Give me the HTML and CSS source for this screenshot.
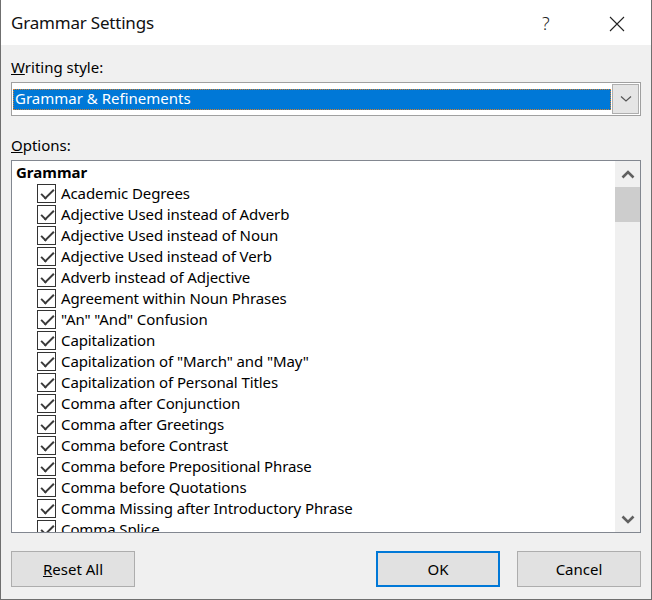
FILE: index.html
```html
<!DOCTYPE html>
<html>
<head>
<meta charset="utf-8">
<link rel="stylesheet" href="styles.css">
</head>
<body>
<div class="window">
  <div class="titlebar">
    <span class="title">Grammar Settings</span>
    <span class="help">?</span>
    <span class="close">
      <svg width="16" height="16" viewBox="0 0 16 16"><path d="M1 1 L15 15 M15 1 L1 15" stroke="#222" stroke-width="1.1" fill="none"/></svg>
    </span>
  </div>
  <div class="content">
    <div class="label label-ws"><u>W</u>riting style:</div>
    <div class="combo">
      <div class="combo-sel">Grammar &amp; Refinements</div>
      <div class="combo-btn">
        <svg width="12" height="8" viewBox="0 0 12 8"><path d="M1 1.5 L6 6 L11 1.5" stroke="#555" stroke-width="1.2" fill="none"/></svg>
      </div>
    </div>
    <div class="label label-opt"><u>O</u>ptions:</div>
    <div class="listbox">
      <div class="list">
        <div class="group">Grammar</div>
        <div class="item"><span class="cb"></span>Academic Degrees</div>
        <div class="item"><span class="cb"></span>Adjective Used instead of Adverb</div>
        <div class="item"><span class="cb"></span>Adjective Used instead of Noun</div>
        <div class="item"><span class="cb"></span>Adjective Used instead of Verb</div>
        <div class="item"><span class="cb"></span>Adverb instead of Adjective</div>
        <div class="item"><span class="cb"></span>Agreement within Noun Phrases</div>
        <div class="item"><span class="cb"></span>"An" "And" Confusion</div>
        <div class="item"><span class="cb"></span>Capitalization</div>
        <div class="item"><span class="cb"></span>Capitalization of "March" and "May"</div>
        <div class="item"><span class="cb"></span>Capitalization of Personal Titles</div>
        <div class="item"><span class="cb"></span>Comma after Conjunction</div>
        <div class="item"><span class="cb"></span>Comma after Greetings</div>
        <div class="item"><span class="cb"></span>Comma before Contrast</div>
        <div class="item"><span class="cb"></span>Comma before Prepositional Phrase</div>
        <div class="item"><span class="cb"></span>Comma before Quotations</div>
        <div class="item"><span class="cb"></span>Comma Missing after Introductory Phrase</div>
        <div class="item"><span class="cb"></span>Comma Splice</div>
      </div>
      <div class="scrollbar">
        <div class="arrow">
          <svg width="14" height="9" viewBox="0 0 14 9"><path d="M1.5 7.5 L7 2 L12.5 7.5" stroke="#606060" stroke-width="2.6" fill="none"/></svg>
        </div>
        <div class="thumb"></div>
        <div class="track"></div>
        <div class="arrow">
          <svg width="14" height="9" viewBox="0 0 14 9"><path d="M1.5 1.5 L7 7 L12.5 1.5" stroke="#606060" stroke-width="2.6" fill="none"/></svg>
        </div>
      </div>
    </div>
    <div class="buttons">
      <div class="btn"><u>R</u>eset All</div>
      <div class="spacer"></div>
      <div class="btn btn-default">OK</div>
      <div class="btn">Cancel</div>
    </div>
  </div>
</div>
</body>
</html>
```

FILE: styles.css
```css
* { box-sizing: border-box; }
html, body { margin: 0; padding: 0; }
body {
  font-family: "Noto Sans", "Open Sans", sans-serif;
  color: #000;
  background: #f0f0f0;
}
.window {
  width: 652px;
  height: 600px;
  border: 1px solid #6f6f6f;
  border-top: none;
  background: #f0f0f0;
  display: flex;
  flex-direction: column;
}
.titlebar {
  height: 45px;
  flex: none;
  background: #fff;
  display: flex;
  align-items: center;
  padding-left: 10px;
}
.title {
  font-size: 17px;
  flex: 1;
  color: #111;
  letter-spacing: -0.2px;
}
.help {
  font-size: 18px;
  color: #222;
  width: 67px;
  font-weight: 300;
}
.close {
  width: 42px;
  display: flex;
  align-items: center;
  padding-top: 2px;
}
.content {
  flex: 1;
  padding: 0 10px;
  display: flex;
  flex-direction: column;
}
.label {
  font-size: 15px;
  line-height: 20px;
}
.label-ws { margin-top: 12px; margin-bottom: 5px; }
.label-opt { margin-top: 19px; margin-bottom: 5px; }
.combo {
  height: 34px;
  flex: none;
  border: 1px solid #a0a0a0;
  background: #fff;
  display: flex;
  align-items: center;
  padding: 0 1px;
}
.combo-sel {
  flex: 1;
  height: 21px;
  background: #0078d7;
  color: #fff;
  font-size: 15px;
  line-height: 19px;
  padding-left: 2px;
  outline: 1px dotted #d08030;
  outline-offset: -1px;
}
.combo-btn {
  width: 27px;
  height: 30px;
  background: #e5e5e5;
  border: 1px solid #aeaeae;
  display: flex;
  align-items: center;
  justify-content: center;
  margin-left: 1px;
}
.listbox {
  height: 373px;
  flex: none;
  border: 1px solid #828790;
  background: #fff;
  display: flex;
  overflow: hidden;
}
.list {
  flex: 1;
  padding-top: 1px;
  overflow: hidden;
}
.group {
  font-weight: bold;
  font-size: 15px;
  height: 21px;
  line-height: 21px;
  padding-left: 4px;
}
.item {
  font-size: 15px;
  letter-spacing: -0.1px;
  height: 21px;
  line-height: 21px;
  display: flex;
  align-items: center;
  padding-left: 25px;
  white-space: nowrap;
}
.cb {
  width: 19px;
  height: 19px;
  border: 1px solid #333;
  background: #fff;
  margin-right: 5px;
  position: relative;
  flex: none;
}
.cb::after {
  content: "";
  position: absolute;
  left: 6px;
  top: 1px;
  width: 5px;
  height: 11px;
  border-right: 2px solid #3a3a3a;
  border-bottom: 2px solid #3a3a3a;
  transform: rotate(45deg);
}
.scrollbar {
  width: 25px;
  background: #f0f0f0;
  display: flex;
  flex-direction: column;
}
.arrow {
  height: 26px;
  display: flex;
  align-items: center;
  justify-content: center;
}
.thumb {
  height: 35px;
  background: #cdcdcd;
}
.track { flex: 1; }
.buttons {
  display: flex;
  margin-top: 18px;
  gap: 17px;
}
.spacer { flex: 1; }
.btn {
  width: 124px;
  height: 36px;
  border: 1px solid #adadad;
  background: #e1e1e1;
  font-size: 15px;
  display: flex;
  align-items: center;
  justify-content: center;
}
.btn-default {
  border: 2px solid #0078d7;
}
```
